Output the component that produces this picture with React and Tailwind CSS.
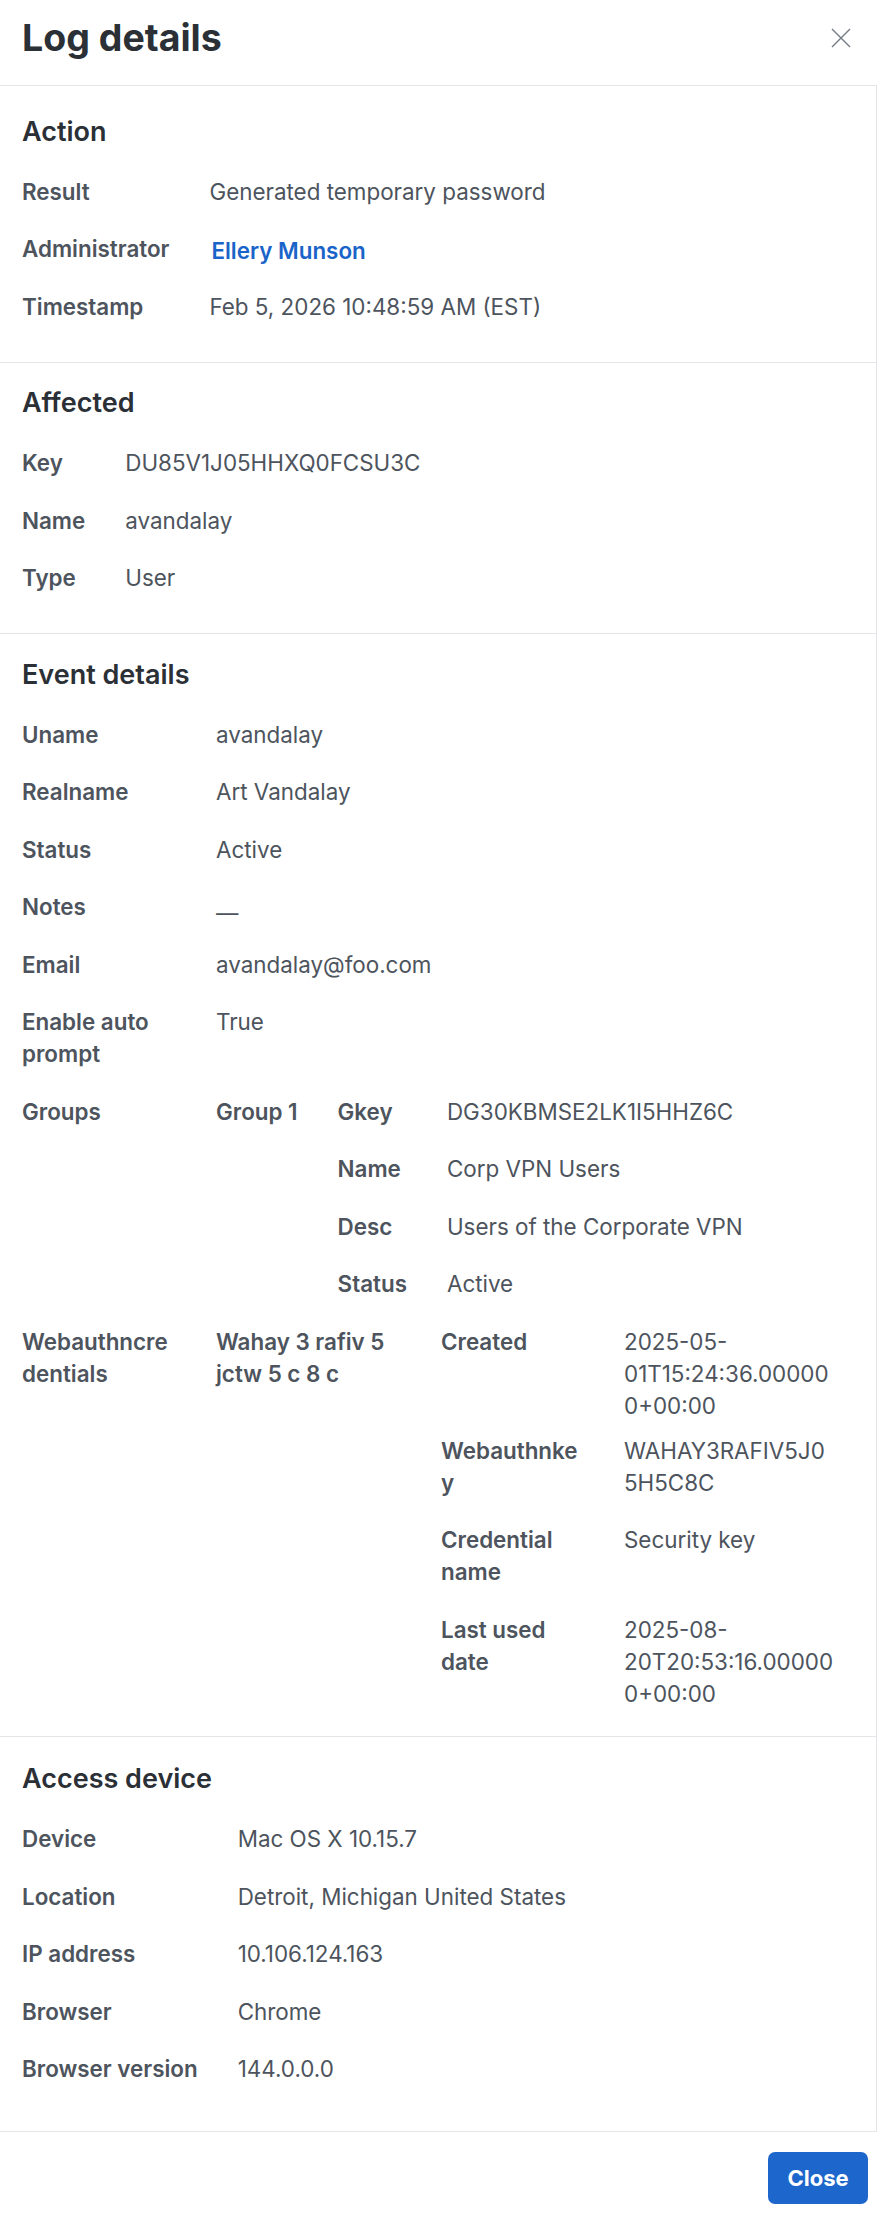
import React from 'react';

const Fields = ({ className = '', children }) => (
  <dl className={`grid grid-cols-[max-content_minmax(0,1fr)] gap-x-[40px] ${className}`}>{children}</dl>
);

const Label = ({ children }) => (
  <dt className="pb-[25.5px] font-semibold [overflow-wrap:anywhere]">{children}</dt>
);

const Value = ({ nested, children }) => (
  <dd className={nested ? 'min-w-0' : 'min-w-0 pb-[12.7px] [overflow-wrap:anywhere]'}>{children}</dd>
);

const Section = ({ title, last, children }) => (
  <section className={`px-[22px] pb-[13.5px] ${last ? 'pt-[26px]' : 'pt-[24.3px] border-b border-[#e3e5e8]'}`}>
    <h2 className="mb-[28.2px] text-[27px] leading-[32px] font-semibold text-[#2b2f36]">{title}</h2>
    {children}
  </section>
);

const LogDetails = () => {
  return (
    <div className="bg-white font-[Inter,sans-serif] text-[22.4px] leading-[32px] text-[#4d545d]">
      <header className="flex justify-between pl-[22px] pr-[26px] h-[85px] pt-[16px]">
        <h1 className="text-[37.5px] leading-[44px] font-bold text-[#2b2f36]">Log details</h1>
        <button className="mt-[12px] h-[20px] w-[20px] text-[#737a84]">
          <svg viewBox="0 0 20 20" width="20" height="20" fill="none" stroke="currentColor" strokeWidth="1.4">
            <path d="M1 1L19 19M19 1L1 19" />
          </svg>
        </button>
      </header>

      <div className="border-y border-r border-[#e3e5e8] pt-[5.5px] pb-[6.5px]">
        <Section title="Action">
          <Fields>
            <Label>Result</Label>
            <Value>Generated temporary password</Value>
            <Label>Administrator</Label>
            <Value>
              <a href="#" className="inline-block pl-[2px] pt-[2px] font-semibold text-[#1a64c9]">Ellery Munson</a>
            </Value>
            <Label>Timestamp</Label>
            <Value>Feb 5, 2026 10:48:59 AM (EST)</Value>
          </Fields>
        </Section>

        <Section title="Affected">
          <Fields>
            <Label>Key</Label>
            <Value>DU85V1J05HHXQ0FCSU3C</Value>
            <Label>Name</Label>
            <Value>avandalay</Value>
            <Label>Type</Label>
            <Value>User</Value>
          </Fields>
        </Section>

        <Section title="Event details">
          <Fields className="[&>dt]:max-w-[154px]">
            <Label>Uname</Label>
            <Value>avandalay</Value>
            <Label>Realname</Label>
            <Value>Art Vandalay</Value>
            <Label>Status</Label>
            <Value>Active</Value>
            <Label>Notes</Label>
            <Value>
              <span className="inline-block translate-y-[6px]">—</span>
            </Value>
            <Label>Email</Label>
            <Value>avandalay@foo.com</Value>
            <Label>Enable auto prompt</Label>
            <Value>True</Value>
            <Label>Groups</Label>
            <Value nested>
              <Fields>
                <Label>Group 1</Label>
                <Value nested>
                  <Fields>
                    <Label>Gkey</Label>
                    <Value>DG30KBMSE2LK1I5HHZ6C</Value>
                    <Label>Name</Label>
                    <Value>Corp VPN Users</Value>
                    <Label>Desc</Label>
                    <Value>Users of the Corporate VPN</Value>
                    <Label>Status</Label>
                    <Value>Active</Value>
                  </Fields>
                </Value>
              </Fields>
            </Value>
            <Label>Webauthncredentials</Label>
            <Value nested>
              <Fields className="[&>dt]:max-w-[185px]">
                <Label>Wahay 3 rafiv 5 jctw 5 c 8 c</Label>
                <Value nested>
                  <Fields className="w-[393px] [&>dt]:max-w-[143px]">
                    <Label>Created</Label>
                    <Value>2025-05-01T15:24:36.000000+00:00</Value>
                    <Label>Webauthnkey</Label>
                    <Value>WAHAY3RAFIV5J05H5C8C</Value>
                    <Label>Credential name</Label>
                    <Value>Security key</Value>
                    <Label>Last used date</Label>
                    <Value>2025-08-20T20:53:16.000000+00:00</Value>
                  </Fields>
                </Value>
              </Fields>
            </Value>
          </Fields>
        </Section>

        <Section title="Access device" last>
          <Fields>
            <Label>Device</Label>
            <Value>Mac OS X 10.15.7</Value>
            <Label>Location</Label>
            <Value>Detroit, Michigan United States</Value>
            <Label>IP address</Label>
            <Value>10.106.124.163</Value>
            <Label>Browser</Label>
            <Value>Chrome</Value>
            <Label>Browser version</Label>
            <Value>144.0.0.0</Value>
          </Fields>
        </Section>
      </div>

      <footer className="flex justify-end pt-[20px] pr-[9px] pb-[12px]">
        <button className="h-[52px] w-[100px] rounded-[7px] bg-[#1d66cc] text-[22px] font-bold text-white">Close</button>
      </footer>
    </div>
  );
};

export default LogDetails;
